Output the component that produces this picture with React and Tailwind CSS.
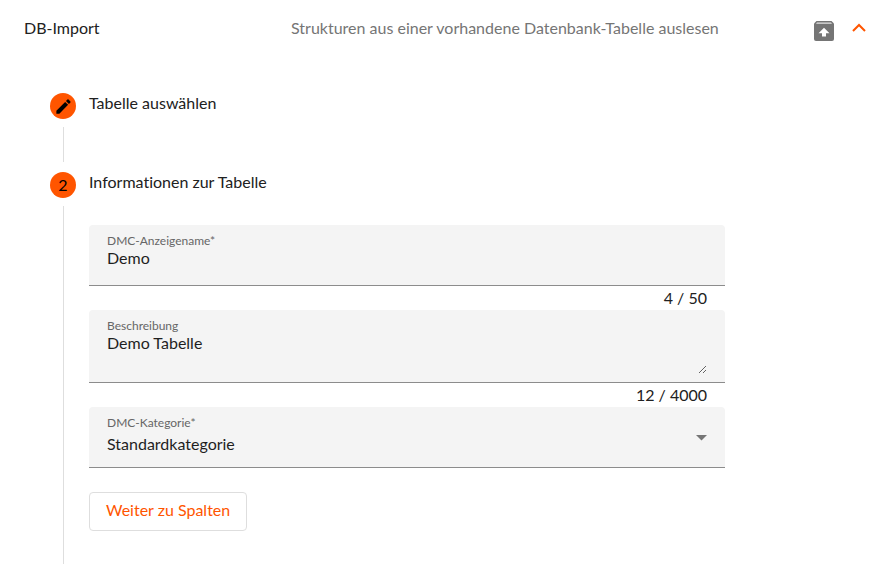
import React, { useState } from 'react';
import { MdEdit } from 'react-icons/md';

const fieldBox = 'rounded-t border-b border-[#8c8c8c] bg-[#f4f4f4] px-[18px]';
const labelText = 'block text-xs leading-4 text-[#666666]';
const inputText = 'block w-full bg-transparent text-base leading-[18px] text-[#1f1f1f] outline-none';

const UnarchiveIcon = () => (
  <svg width="20" height="20" viewBox="0 0 20 20">
    <path d="M2.500 0h15L20 2.500V18a2 2 0 0 1-2 2H2a2 2 0 0 1-2-2V2.500z" fill="#757575" />
    <path d="M3 1.500h14l1 1.300H2z" fill="#e4e4e4" />
    <path d="M10 6.800 15.500 12.300H12V15.500H8V12.300H4.500z" fill="#ffffff" />
  </svg>
);

const StepBadge = ({ children }) => (
  <div className="flex size-[26px] shrink-0 items-center justify-center rounded-full bg-[#ff5500] text-base leading-none text-black">
    {children}
  </div>
);

const Step = ({ badge, title, last, children }) => (
  <li className={`flex gap-[13px] ${last ? 'grow' : ''}`}>
    <div className="flex flex-col items-center">
      <StepBadge>{badge}</StepBadge>
      <div className={`mt-2 w-px grow bg-[#dedede] ${last ? '' : 'mb-[10px]'}`} />
    </div>
    <div className="min-w-0 grow">
      <h2 className="text-base leading-5">{title}</h2>
      {children}
    </div>
  </li>
);

const Counter = ({ value, max }) => (
  <p className="px-[18px] text-right text-base leading-6">
    {value.length} / {max}
  </p>
);

export default function App() {
  const [name, setName] = useState('Demo');
  const [description, setDescription] = useState('Demo Tabelle');
  const [category, setCategory] = useState('Standardkategorie');

  return (
    <main className="flex min-h-screen flex-col bg-white font-['Lato','Open_Sans',sans-serif] text-[#212121] [font-variant-ligatures:none]">
      {/* Panel header */}
      <header className="flex items-start pt-[17px] pr-[11px] pl-6">
        <h1 className="w-[267px] shrink-0 text-base leading-[22px]">DB-Import</h1>
        <p className="grow text-base leading-[22px] text-[#757575]">
          Strukturen aus einer vorhandene Datenbank-Tabelle auslesen
        </p>
        <div className="flex items-start gap-[18px] pt-1">
          <button type="button" aria-label="Importieren">
            <UnarchiveIcon />
          </button>
          <button type="button" aria-label="Einklappen" className="pt-0.5 text-[#ff5500]">
            <svg width="14" height="10" viewBox="0 0 14 10" fill="none" stroke="currentColor" strokeWidth="2">
              <path d="M1 8 7 2l6 6" />
            </svg>
          </button>
        </div>
      </header>

      {/* Stepper */}
      <ol className="flex grow flex-col pt-[52px] pr-[152px] pl-[50px]">
        <Step badge={<MdEdit size={19} />} title="Tabelle auswählen">
          <div className="h-[59px]" />
        </Step>

        <Step badge="2" title="Informationen zur Tabelle" last>
          <form className="pt-[33px] pb-8" onSubmit={(e) => e.preventDefault()}>
            <div className={`${fieldBox} pt-2 pb-[18px]`}>
              <label htmlFor="name" className={labelText}>DMC-Anzeigename*</label>
              <input
                id="name"
                className={inputText}
                value={name}
                maxLength={50}
                onChange={(e) => setName(e.target.value)}
              />
            </div>
            <Counter value={name} max={50} />

            <div className={`${fieldBox} pt-2 pb-2`}>
              <label htmlFor="description" className={labelText}>Beschreibung</label>
              <textarea
                id="description"
                className={`${inputText} h-10 resize-y`}
                value={description}
                maxLength={4000}
                onChange={(e) => setDescription(e.target.value)}
              />
            </div>
            <Counter value={description} max={4000} />

            <div className={`${fieldBox} flex items-center pt-2 pb-3.5`}>
              <div className="grow">
                <label htmlFor="category" className={labelText}>DMC-Kategorie*</label>
                <select
                  id="category"
                  className={`${inputText} mt-1 appearance-none`}
                  value={category}
                  onChange={(e) => setCategory(e.target.value)}
                >
                  <option>Standardkategorie</option>
                </select>
              </div>
              <svg width="11" height="6" viewBox="0 0 11 6" className="mt-2 fill-[#757575]">
                <path d="M0 0h11L5.500 5.500z" />
              </svg>
            </div>

            <button
              type="submit"
              className="mt-6 rounded border border-[#dedede] px-4 pt-1 pb-2 text-base leading-[25px] text-[#ff5500]"
            >
              Weiter zu Spalten
            </button>
          </form>
        </Step>
      </ol>
    </main>
  );
}
